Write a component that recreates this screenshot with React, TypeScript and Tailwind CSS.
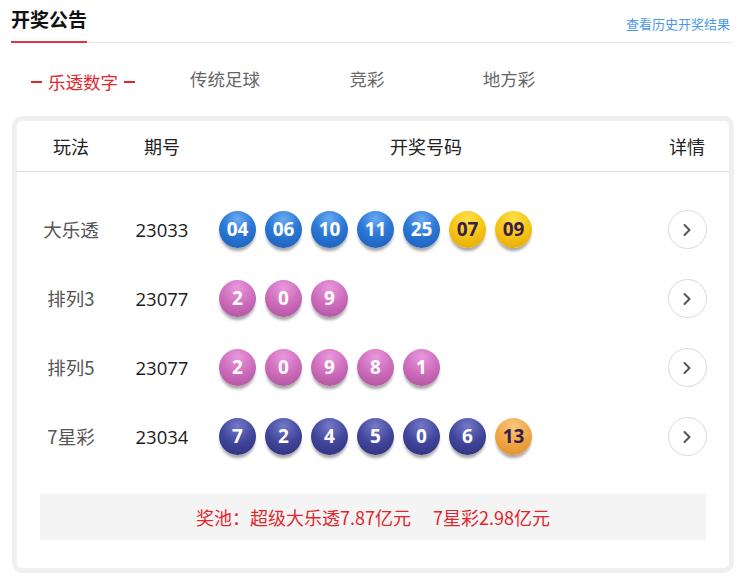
import { ChevronRight } from 'lucide-react';

type BallKind = 'blue' | 'yellow' | 'pink' | 'navy' | 'orange';

interface DrawRow {
  name: string;
  issue: string;
  balls: { n: string; kind: BallKind }[];
}

const ballStyle: Record<BallKind, string> = {
  blue: 'bg-[radial-gradient(circle_at_50%_22%,#6aaaf0_0%,#2c78d6_45%,#1b5bb6_100%)] text-white',
  yellow: 'bg-[radial-gradient(circle_at_50%_22%,#fde04a_0%,#f5c416_50%,#e3a304_100%)] text-[#3a1d4c]',
  pink: 'bg-[radial-gradient(circle_at_50%_22%,#ea98de_0%,#cd6cbb_50%,#a9509a_100%)] text-white',
  navy: 'bg-[radial-gradient(circle_at_50%_22%,#7479c8_0%,#40469b_50%,#2a2d78_100%)] text-white',
  orange: 'bg-[radial-gradient(circle_at_50%_22%,#f8c67c_0%,#f0a748_50%,#de8a24_100%)] text-[#3a1d4c]',
};

const rows: DrawRow[] = [
  {
    name: '大乐透',
    issue: '23033',
    balls: [
      { n: '04', kind: 'blue' },
      { n: '06', kind: 'blue' },
      { n: '10', kind: 'blue' },
      { n: '11', kind: 'blue' },
      { n: '25', kind: 'blue' },
      { n: '07', kind: 'yellow' },
      { n: '09', kind: 'yellow' },
    ],
  },
  {
    name: '排列3',
    issue: '23077',
    balls: ['2', '0', '9'].map((n) => ({ n, kind: 'pink' as BallKind })),
  },
  {
    name: '排列5',
    issue: '23077',
    balls: ['2', '0', '9', '8', '1'].map((n) => ({ n, kind: 'pink' as BallKind })),
  },
  {
    name: '7星彩',
    issue: '23034',
    balls: [
      ...['7', '2', '4', '5', '0', '6'].map((n) => ({ n, kind: 'navy' as BallKind })),
      { n: '13', kind: 'orange' },
    ],
  },
];

const tabs = ['乐透数字', '传统足球', '竞彩', '地方彩'];

function Ball({ n, kind }: { n: string; kind: BallKind }) {
  return (
    <div
      className={`w-[37px] h-[37px] rounded-full flex items-center justify-center text-[19px] font-bold shadow-[0_4px_3px_-1px_rgba(0,0,0,0.35)] ${ballStyle[kind]}`}
      style={{ fontFamily: '"Open Sans", "Noto Sans CJK SC", sans-serif' }}
    >
      {n}
    </div>
  );
}

export default function App() {
  return (
    <div
      className="w-[750px] h-[583px] bg-white overflow-hidden"
      style={{ fontFamily: '"Noto Sans CJK SC", "Open Sans", sans-serif' }}
    >
      {/* 标题栏 */}
      <div className="ml-[11px] mr-[18px] h-[43px] flex items-stretch justify-between border-b border-[#e6e6e6]">
        <div className="text-[19px] font-bold text-[#111] leading-none pt-[9px] border-b-2 border-[#e0383e] -mb-px">
          开奖公告
        </div>
        <a className="text-[13px] text-[#4a97e8] pt-[14px] pr-[2px]">查看历史开奖结果</a>
      </div>

      {/* 分类标签 */}
      <div className="flex pl-[12px] h-[73px] items-center">
        {tabs.map((t, i) => (
          <div
            key={t}
            className={`w-[142px] text-center text-[17.5px] ${i === 0 ? 'text-[#e3262c]' : 'text-[#666]'}`}
          >
            {i === 0 ? (
              <span className="inline-flex items-center gap-[6px]">
                <span className="inline-block w-[11px] h-[2px] bg-[#e3262c]" />
                {t}
                <span className="inline-block w-[11px] h-[2px] bg-[#e3262c]" />
              </span>
            ) : (
              t
            )}
          </div>
        ))}
      </div>

      {/* 开奖表格 */}
      <div className="ml-[12px] w-[722px] border-[5px] border-[#efefef] rounded-[10px] bg-white">
        <div className="flex items-center h-[51px] border-b border-[#dcdcdc] text-[18px] text-[#222]">
          <div className="w-[108px] text-center">玩法</div>
          <div className="w-[74px] text-center">期号</div>
          <div className="flex-1 text-center pl-[8px]">开奖号码</div>
          <div className="w-[84px] text-center">详情</div>
        </div>

        <div className="pt-[23px]">
          {rows.map((r) => (
            <div key={r.name} className="flex items-center h-[69px]">
              <div className="w-[108px] text-center text-[18.5px] text-[#555]">{r.name}</div>
              <div
                className="w-[74px] text-center text-[18.5px] text-[#1a1a1a]"
                style={{ fontFamily: '"Open Sans", sans-serif' }}
              >
                {r.issue}
              </div>
              <div className="flex-1 flex gap-[9px] pl-[20px]">
                {r.balls.map((b, i) => (
                  <Ball key={i} n={b.n} kind={b.kind} />
                ))}
              </div>
              <div className="w-[84px] flex justify-center">
                <div className="w-[39px] h-[39px] rounded-full border border-[#dadada] flex items-center justify-center">
                  <ChevronRight className="w-[20px] h-[20px] text-[#555]" strokeWidth={2.4} />
                </div>
              </div>
            </div>
          ))}
        </div>

        <div className="mx-[23px] mt-[23px] mb-[28px] h-[46px] bg-[#f4f4f4] flex items-center justify-center text-[18px] text-[#e3262c]">
          奖池：超级大乐透7.87亿元<span className="inline-block w-[22px]" />7星彩2.98亿元
        </div>
      </div>
    </div>
  );
}
